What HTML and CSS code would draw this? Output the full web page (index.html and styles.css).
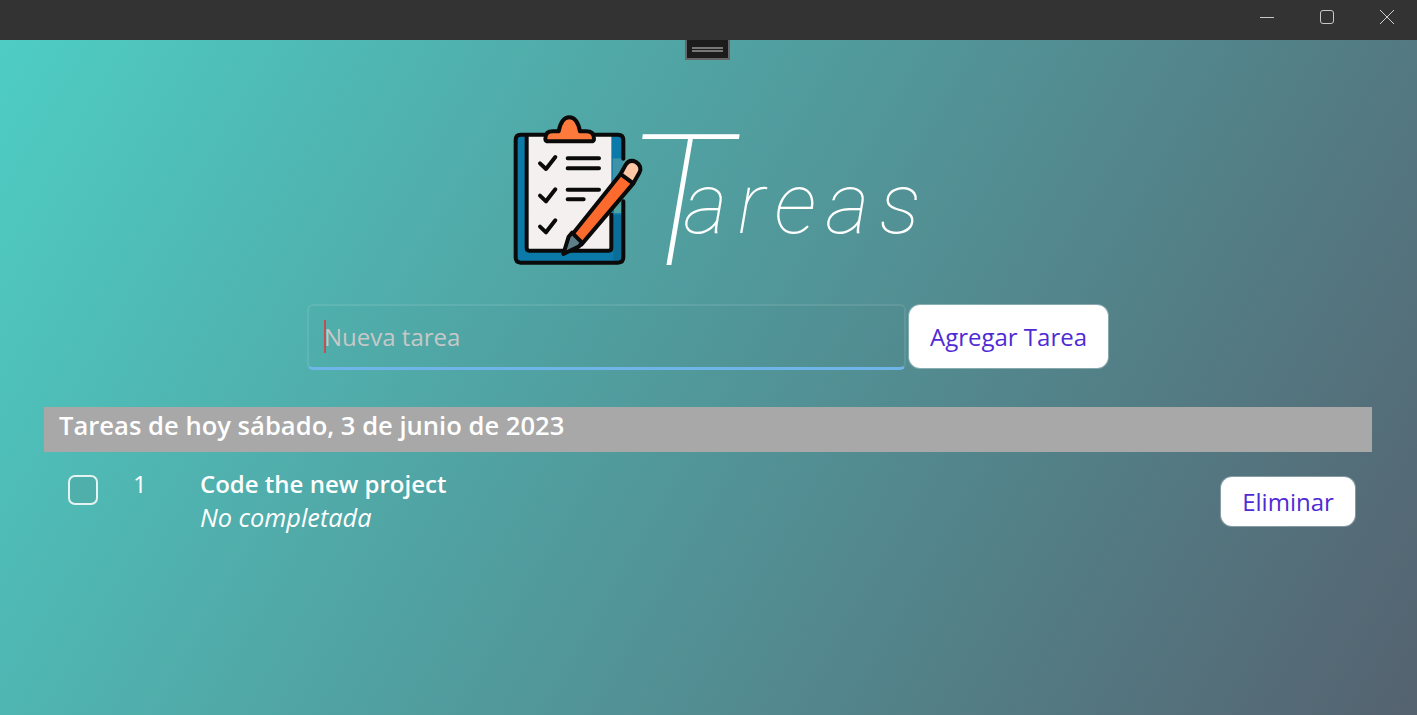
FILE: index.html
```html
<!DOCTYPE html>
<html lang="es">
<head>
<meta charset="utf-8">
<title>Tareas</title>
<link rel="stylesheet" href="styles.css">
</head>
<body>
<header class="titlebar">
  <div class="win-btn"><svg width="16" height="16" viewBox="0 0 16 16"><path d="M1 8.5H15" stroke="#c8c8c8" fill="none"/></svg></div>
  <div class="win-btn"><svg width="16" height="16" viewBox="0 0 16 16"><rect x="1.5" y="1.5" width="13" height="13" rx="2.5" stroke="#c8c8c8" fill="none"/></svg></div>
  <div class="win-btn"><svg width="16" height="16" viewBox="0 0 16 16"><path d="M1 1L15 15M15 1L1 15" stroke="#d0d0d0" fill="none"/></svg></div>
</header>
<main class="app">
  <div class="grip"><span class="grip-lines"></span></div>
  <section class="logo">
    <svg class="logo-icon" width="160" height="180" viewBox="0 0 480 540">
      <g stroke-linejoin="round" stroke-linecap="round">
        <path d="M62 104H354Q370 104 370 120V176H342V340H370V472Q370 488 354 488H62Q47 488 47 472V120Q47 104 62 104Z" fill="#0b7aa8"/>
        <path d="M338 176H370V304H338Z" fill="#3f93a6"/>
        <path d="M80 108H334V444Q334 452 326 452H88Q80 452 80 444Z" fill="#f4f0f0"/>
        <path d="M340 345H368V482H340Z" fill="#0a6e98"/>
        <path d="M136 104H62Q47 104 47 120V472Q47 488 62 488H354Q370 488 370 472V304M370 176V120Q370 104 354 104H282" fill="none" stroke="#0a0a0a" stroke-width="12"/>
        <path d="M80 108V444Q80 452 88 452H326Q334 452 334 444V344" fill="none" stroke="#0a0a0a" stroke-width="12"/>
        <path d="M136 116Q136 94 158 94H176Q184 52 208 52Q232 52 240 94H258Q282 94 282 116Q282 124 272 124H146Q136 124 136 116Z" fill="#fd7a3c" stroke="#0a0a0a" stroke-width="12"/>
        <path d="M120 190L138 207L166 171M120 287L138 304L166 268M120 380L138 397L166 361M203 175H297M203 205H297M203 269H297M203 298H251" fill="none" stroke="#0a0a0a" stroke-width="12"/>
        <path d="M216 404L362 222L400 250L244 434Z" fill="#fd6a2e" stroke="#0a0a0a" stroke-width="12"/>
        <path d="M362 222L376 196Q388 176 408 186Q428 200 418 218L400 250Z" fill="#fdc7a5" stroke="#0a0a0a" stroke-width="12"/>
        <path d="M206 410L216 398L246 428L236 440L190 462Z" fill="#5d7f88" stroke="#0a0a0a" stroke-width="12"/>
      </g>
    </svg>
    <h1 class="wordmark">Tareas</h1>
  </section>
  <form class="new-task">
    <div class="field"><span class="caret"></span><span class="placeholder">Nueva tarea</span></div>
    <button class="btn btn-add" type="button">Agregar Tarea</button>
  </form>
  <h2 class="day-title">Tareas de hoy sábado, 3 de junio de 2023</h2>
  <div class="task">
    <span class="check"></span>
    <span class="task-num">1</span>
    <div class="task-body">
      <div class="task-name">Code the new project</div>
      <div class="task-state">No completada</div>
    </div>
    <button class="btn btn-del" type="button">Eliminar</button>
  </div>
</main>
</body>
</html>
```
FILE: styles.css
```css
* { box-sizing: border-box; }
html, body { margin: 0; height: 100%; overflow: hidden; }
body { display: flex; flex-direction: column; font-family: "Open Sans", sans-serif; color: #fff; }

.titlebar { height: 40px; flex: none; background: #333333; display: flex; justify-content: flex-end; }
.win-btn { width: 60px; height: 34px; display: flex; align-items: center; justify-content: center; }

.app { position: relative; flex: 1; background: linear-gradient(120deg, #4ecdc4, #556270); padding: 0 45px 0 44px; display: flex; flex-direction: column; }

.grip { position: absolute; left: 685px; top: 0; width: 45px; height: 20px; background: #1c1c1c; border: 2px solid #666; border-top: 0; display: flex; align-items: center; justify-content: center; }
.grip-lines { width: 31px; height: 5px; border-top: 2px solid #777; border-bottom: 2px solid #777; }

.logo { display: flex; justify-content: center; align-items: flex-start; height: 170px; padding: 60px 0 0 14px; }
.logo-icon { flex: none; }
.wordmark { margin: 0; width: 270px; height: 150px; font-family: "Roboto", sans-serif; font-weight: 100; font-style: italic; font-size: 85px; line-height: 208px; letter-spacing: 10px; white-space: nowrap; }
.wordmark::first-letter { float: left; font-size: 183px; line-height: 183px; letter-spacing: 0; margin: 11px -47px 0 -35px; }

.new-task { display: flex; justify-content: center; gap: 2px; margin-top: 94px; }
.field { width: 599px; height: 66px; border: 2px solid rgba(255, 255, 255, .09); border-bottom: 3px solid #6fb5e8; border-radius: 6px; background: rgba(0, 0, 0, .008); display: flex; align-items: center; padding-left: 15px; font-size: 24px; }
.caret { width: 2px; height: 33px; background: #c05050; flex: none; margin-right: -2px; }
.placeholder { color: #c8c8c8; }

.btn { background: #fff; border: 1px solid rgba(255, 255, 255, .3); background-clip: padding-box; border-radius: 12px; color: #4f2bd4; font-family: "Open Sans", sans-serif; font-size: 24px; padding: 0; }
.btn-add { width: 201px; height: 65px; }
.btn-del { width: 136px; height: 51px; margin-left: auto; margin-top: 10px; margin-right: 16px; }

.day-title { margin: 37px 0 0; height: 45px; background: #a8a8a8; font-size: 25.6px; font-weight: 600; line-height: 38px; padding-left: 15px; }

.task { display: flex; align-items: flex-start; padding-top: 14px; }
.check { width: 30px; height: 30px; margin: 9px 0 0 24px; border: 2px solid rgba(255, 255, 255, .85); border-radius: 7px; background: rgba(80, 165, 160, .5); flex: none; }
.task-num { width: 67px; padding-left: 35px; font-size: 24px; line-height: 36px; flex: none; }
.task-body { margin-left: 35px; }
.task-name { font-size: 24px; font-weight: 600; line-height: 36px; }
.task-state { font-size: 25.3px; font-style: italic; line-height: 30px; }
```
